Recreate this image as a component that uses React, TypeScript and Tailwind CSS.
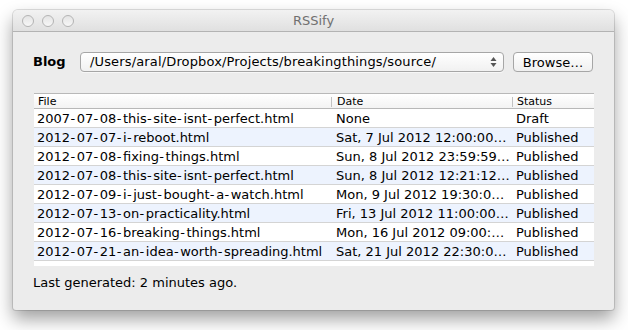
import React from 'react';

const rows = [
  { file: '2007-07-08-this-site-isnt-perfect.html', date: 'None', status: 'Draft' },
  { file: '2012-07-07-i-reboot.html', date: 'Sat, 7 Jul 2012 12:00:00…', status: 'Published' },
  { file: '2012-07-08-fixing-things.html', date: 'Sun, 8 Jul 2012 23:59:59…', status: 'Published' },
  { file: '2012-07-08-this-site-isnt-perfect.html', date: 'Sun, 8 Jul 2012 12:21:12…', status: 'Published' },
  { file: '2012-07-09-i-just-bought-a-watch.html', date: 'Mon, 9 Jul 2012 19:30:0…', status: 'Published' },
  { file: '2012-07-13-on-practicality.html', date: 'Fri, 13 Jul 2012 11:00:00…', status: 'Published' },
  { file: '2012-07-16-breaking-things.html', date: 'Mon, 16 Jul 2012 09:00:…', status: 'Published' },
  { file: '2012-07-21-an-idea-worth-spreading.html', date: 'Sat, 21 Jul 2012 22:30:0…', status: 'Published' },
];

const TrafficLight: React.FC = () => (
  <span className="block w-[12px] h-[12px] rounded-full border border-[#b4b4b4] bg-gradient-to-b from-[#e4e4e4] to-[#f7f7f7]" />
);

// Lucida Grande draws hyphens wider than DejaVu, pad them a bit
function FileName({ name }: { name: string }) {
  const parts = name.split('-');
  return (
    <>
      {parts.map((p, i) => (
        <React.Fragment key={i}>
          {i > 0 && <span className="tracking-[1.6px] pl-[0.3px]">-</span>}
          {p}
        </React.Fragment>
      ))}
    </>
  );
}

const App: React.FC = () => {
  return (
    <div className="w-[628px] h-[330px] bg-white pt-[10px] pl-[13px] font-['DejaVu_Sans',sans-serif] text-[13px] text-black">
      <div className="w-[601px] h-[300px] flex flex-col bg-[#ececec] rounded-t-[5px] rounded-b-[3px] shadow-[0_9px_18px_rgba(0,0,0,0.38),0_0_0_1px_rgba(0,0,0,0.12)]">
        {/* Title bar */}
        <div className="relative h-[22px] flex items-center px-[9px] rounded-t-[5px] bg-gradient-to-b from-[#f2f2f2] to-[#e0e0e0] border-b border-[#b3b3b3]">
          <div className="flex gap-[8px]">
            <TrafficLight />
            <TrafficLight />
            <TrafficLight />
          </div>
          <div className="absolute inset-0 flex items-center justify-center pt-[1px] text-[13px] text-[#707070]">RSSify</div>
        </div>

        <div className="flex-1 flex flex-col px-[20px]">
          {/* Blog row */}
          <div className="mt-[20px] h-[20px] flex items-center">
            <span className="w-[47px] font-bold text-[13px]">Blog</span>
            <div className="w-[424px] h-[20px] flex items-center justify-between pl-[9px] pr-[6px] rounded-[4px] border border-[#a6a6a6] bg-gradient-to-b from-[#ffffff] to-[#f1f1f1] shadow-[0_1px_0_rgba(255,255,255,0.6)]">
              <span className="whitespace-nowrap tracking-[0.15px]">/Users/aral/Dropbox/Projects/breakingthings/source/</span>
              <svg width="7" height="12" viewBox="0 0 7 12">
                <path d="M3.5 1 L6.5 5 L0.5 5 Z" fill="#555" />
                <path d="M3.5 11 L6.5 7 L0.5 7 Z" fill="#555" />
              </svg>
            </div>
            <button className="ml-[9px] w-[80px] h-[20px] rounded-[4px] border border-[#a6a6a6] bg-gradient-to-b from-[#ffffff] to-[#f0f0f0] text-[13px] leading-none">
              Browse…
            </button>
          </div>

          {/* Table */}
          <div className="mt-[21px] ml-[1px] w-[560px] bg-white">
            <div className="h-[16px] grid grid-cols-[297px_181px_82px] border-t border-b border-[#b8b8b8] bg-gradient-to-b from-[#ffffff] to-[#f3f3f3] text-[11px] leading-[15px]">
              <div className="pl-[4px]">File</div>
              <div className="flex items-center">
                <span className="w-px h-[10px] bg-[#c2c2c2]" />
                <span className="pl-[5px]">Date</span>
              </div>
              <div className="flex items-center">
                <span className="w-px h-[10px] bg-[#c2c2c2]" />
                <span className="pl-[4px]">Status</span>
              </div>
            </div>
            {rows.map((r, i) => (
              <div
                key={i}
                className={`h-[19px] grid grid-cols-[297px_181px_82px] items-center pt-[2px] border-b border-[#d4d4d4] whitespace-nowrap leading-[16px] ${i % 2 === 1 ? 'bg-[#edf3fe]' : 'bg-white'}`}
              >
                <div className="pl-[3px] overflow-hidden"><FileName name={r.file} /></div>
                <div className="pl-[5px] overflow-hidden">{r.date}</div>
                <div className="pl-[4px] overflow-hidden">{r.status}</div>
              </div>
            ))}
            <div className="h-[5px]" />
          </div>

          <div className="mt-[9px] leading-[16px]">Last generated: 2 minutes ago.</div>
        </div>
      </div>
    </div>
  );
};

export default App;
